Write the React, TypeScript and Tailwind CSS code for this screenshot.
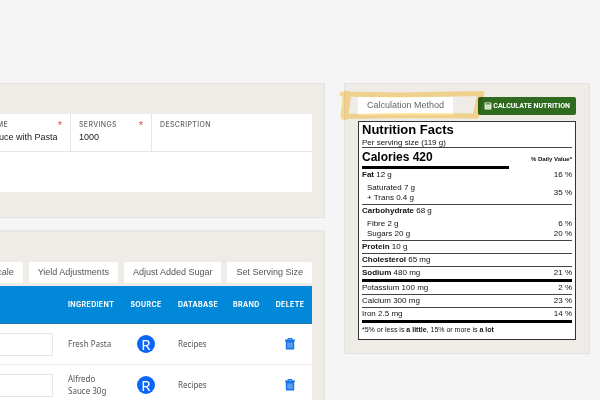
import type { ReactNode } from "react";

const arial = "font-['Liberation_Sans',Arial,sans-serif]";
const noto = "font-['Noto_Sans',sans-serif]";
const caps = "font-['Inter',sans-serif] tracking-wider";

function TrashIcon() {
  return (
    <svg viewBox="0 0 10 12" className="mx-auto block h-3 w-2.5" aria-hidden="true">
      <path d="M3 2V1.2Q3 .6 3.6.6H6.4Q7 .6 7 1.2V2" fill="none" stroke="#1a73e8" strokeWidth="1.1" />
      <rect x="0" y="1.6" width="10" height="1.6" rx="0.4" fill="#1a73e8" />
      <path d="M0.8 3H9.2V10.4Q9.2 11.6 8.1 11.6H1.9Q.8 11.6 .8 10.4Z" fill="#1a73e8" />
      <path d="M3.1 4.6V9.9M5 4.6V9.9M6.9 4.6V9.9" stroke="#8fbdfa" strokeWidth="1" />
    </svg>
  );
}

function CalculatorIcon() {
  return (
    <svg viewBox="0 0 8 8" className="h-2 w-2 shrink-0" aria-hidden="true">
      <rect x="0.6" y="0.4" width="6.8" height="7.2" rx="0.7" fill="#f3f8e8" />
      <rect x="1.6" y="1.3" width="4.8" height="1.2" fill="#2f6b1f" />
      <path d="M1.8 4.1H6.2M1.8 6H6.2" stroke="#2f6b1f" strokeWidth="0.5" strokeDasharray="1 0.7" />
    </svg>
  );
}

function Highlight() {
  return (
    <svg
      viewBox="0 0 150 34"
      className="pointer-events-none absolute -top-2 -left-5 h-[34px] w-[150px] mix-blend-multiply"
      fill="none"
      stroke="#ffe39c"
      strokeLinecap="round"
      strokeLinejoin="round"
      aria-hidden="true"
    >
      <path d="M4 5 L60 6 L144 4.5" strokeWidth="5" />
      <path d="M9 5.5 L6.5 27" strokeWidth="8" />
      <path d="M6 27.5 L70 26.5 L138 27" strokeWidth="5" />
      <path d="M142.5 5.5 L138 26.5" strokeWidth="6.5" />
    </svg>
  );
}

function Field({ id, label, value, required, className }: { id: string; label: string; value: string; required?: boolean; className: string }) {
  return (
    <div className={`px-2 pt-1.5 ${className}`}>
      <div className="flex justify-between">
        <label htmlFor={id} className={`${caps} text-[7px] leading-[10px] font-medium whitespace-nowrap text-[#666]`}>{label}</label>
        {required && <span className={`${arial} text-[11px] leading-[10px] text-[#e5484d]`}>*</span>}
      </div>
      <input id={id} defaultValue={value} className={`${arial} block w-full text-[9px] leading-[14px] text-[#222] outline-none`} />
    </div>
  );
}

function Tool({ children }: { children: ReactNode }) {
  return (
    <button type="button" className={`${arial} h-[21px] shrink-0 rounded-[1px] bg-white px-[9px] text-[9px] whitespace-nowrap text-[#555]`}>
      {children}
    </button>
  );
}

const ingredients = [
  { name: "Fresh Pasta", database: "Recipes" },
  { name: "Alfredo Sauce 30g", database: "Recipes" },
];

const thin = "border-b border-[#444]";
const thick = "border-b-[3px] border-black";

function Nutrient({ name, amount, dv, bold, line = thin }: { name: string; amount: string; dv?: string; bold?: boolean; line?: string }) {
  return (
    <tr>
      <th scope="row" className={`p-0 text-left font-normal ${line}`}>
        <span className={bold ? "font-bold" : ""}>{name}</span> {amount}
      </th>
      <td className={`p-0 text-right ${line}`}>{dv}</td>
    </tr>
  );
}

function NutritionLabel() {
  return (
    <section className={`${arial} mt-1.5 border border-[#333] bg-white px-[3px] pb-[3px] text-[8px] leading-[12px] text-[#111]`}>
      <h2 className="text-[13px] leading-[16px] font-bold text-black">Nutrition Facts</h2>
      <p className={`leading-[9px] ${thin}`}>Per serving size (119 g)</p>
      <div className="flex items-center justify-between">
        <p className={`w-[70%] text-[12px] leading-[18px] font-bold text-black ${thick}`}>Calories 420</p>
        <p className="text-[6px] font-bold">% Daily Value*</p>
      </div>
      <table className="w-full border-separate border-spacing-0">
        <tbody>
          <Nutrient name="Fat" amount="12 g" dv="16 %" bold line="" />
          <tr className="leading-[10px]">
            <th scope="row" className="pt-0.5 pb-0 pl-[5px] text-left font-normal">Saturated 7 g</th>
            <td rowSpan={2} className={`p-0 text-right align-middle ${thin}`}>35 %</td>
          </tr>
          <tr className="leading-[10px]">
            <th scope="row" className={`pt-0 pb-px pl-[5px] text-left font-normal ${thin}`}>+ Trans 0.4 g</th>
          </tr>
          <Nutrient name="Carbohydrate" amount="68 g" bold line="" />
          <tr className="leading-[10px]">
            <th scope="row" className="pt-0.5 pb-0 pl-[5px] text-left font-normal">Fibre 2 g</th>
            <td className="pt-0.5 text-right">6 %</td>
          </tr>
          <tr className="leading-[10px]">
            <th scope="row" className={`pt-0 pb-px pl-[5px] text-left font-normal ${thin}`}>Sugars 20 g</th>
            <td className={`pb-px text-right ${thin}`}>20 %</td>
          </tr>
          <Nutrient name="Protein" amount="10 g" bold />
          <Nutrient name="Cholesterol" amount="65 mg" bold />
          <Nutrient name="Sodium" amount="480 mg" dv="21 %" bold line={thick} />
          <Nutrient name="Potassium" amount="100 mg" dv="2 %" />
          <Nutrient name="Calcium" amount="300 mg" dv="23 %" />
          <Nutrient name="Iron" amount="2.5 mg" dv="14 %" line={thick} />
        </tbody>
      </table>
      <p className="text-[7px] leading-[13px] whitespace-nowrap">
        *5% or less is <b>a little</b>, 15% or more is <b>a lot</b>
      </p>
    </section>
  );
}

export default function App() {
  return (
    <div className="flex min-h-screen items-start gap-[19px] bg-[#f5f5f5] pt-[83px] pr-2.5">
      <main className="h-[calc(100vh-83px)] min-w-0 flex-1 overflow-hidden">
        <section className="-ml-[52px] border border-[#e4e2e1] bg-[#efebe7] pt-[30px] pr-3 pb-[25px]">
          <form className="bg-white">
            <div className="flex h-[38px] border-b border-[#e6e6e6]">
              <Field id="name" label="RECIPE NAME" value="Alfredo Sauce with Pasta" required className="w-[122px] shrink-0 border-r border-[#e6e6e6]" />
              <Field id="servings" label="SERVINGS" value="1000" required className="w-[81px] shrink-0 border-r border-[#e6e6e6]" />
              <Field id="description" label="DESCRIPTION" value="" className="min-w-0 flex-1" />
            </div>
            <div className="h-10" />
          </form>
        </section>

        <section className="mt-3 -ml-[52px] min-h-full border-2 border-[#e8e5e3] bg-[#efebe7] pt-[30px] pr-[11px]">
          <div className="flex justify-end gap-1.5">
            <Tool>Scale</Tool>
            <Tool>Yield Adjustments</Tool>
            <Tool>Adjust Added Sugar</Tool>
            <Tool>Set Serving Size</Tool>
          </div>
          <table className={`${noto} mt-[3px] w-full table-fixed border-separate border-spacing-0 bg-white text-[8px] leading-[12px] text-[#555]`}>
            <thead>
              <tr className={`${caps} h-[38px] bg-[#0288d8] text-left text-[7px] text-white`}>
                <th className="border-b border-[#1c6ea8] p-0" />
                <th className="w-[62px] border-b border-[#1c6ea8] px-2 font-bold">INGREDIENT</th>
                <th className="w-12 border-b border-[#1c6ea8] px-0 text-center font-bold">SOURCE</th>
                <th className="w-[55px] border-b border-[#1c6ea8] px-2 font-bold">DATABASE</th>
                <th className="w-[43px] border-b border-[#1c6ea8] px-2 font-bold">BRAND</th>
                <th className="w-11 border-b border-[#1c6ea8] px-0 text-center font-bold">DELETE</th>
              </tr>
            </thead>
            <tbody>
              {ingredients.map((item) => (
                <tr key={item.name} className="h-[41px]">
                  <td className="border-b border-[#eee] py-0 pr-[7px] pl-2">
                    <input aria-label={`Amount of ${item.name}`} className="block h-[23px] w-full border border-[#e6e6e6] bg-white outline-none" />
                  </td>
                  <td className="border-b border-[#eee] px-2 py-0">{item.name}</td>
                  <td className="border-b border-[#eee] p-0">
                    <span className="mx-auto flex size-[18px] items-center justify-center rounded-full bg-[#0b66f5] text-[15px] leading-none text-white">R</span>
                  </td>
                  <td className="border-b border-[#eee] px-2 py-0">{item.database}</td>
                  <td className="border-b border-[#eee] p-0" />
                  <td className="border-b border-[#eee] p-0">
                    <button type="button" aria-label={`Delete ${item.name}`} className="block w-full"><TrashIcon /></button>
                  </td>
                </tr>
              ))}
            </tbody>
          </table>
        </section>
      </main>

      <aside className="w-[246px] shrink-0 border border-[#e4e2e1] bg-[#efebe7] px-[13px] pt-[13px] pb-[13px]">
        <div className="relative flex items-center justify-between">
          <button type="button" className={`${arial} h-[18px] bg-white px-[9px] text-[9px] text-[#666]`}>Calculation Method</button>
          <button type="button" className="flex h-[18px] items-center gap-px rounded-[2px] bg-[#2f6b1f] px-1.5 font-['Roboto',sans-serif] text-[7px] font-bold whitespace-nowrap text-white">
            <CalculatorIcon />
            CALCULATE NUTRITION
          </button>
          <Highlight />
        </div>
        <NutritionLabel />
      </aside>
    </div>
  );
}
